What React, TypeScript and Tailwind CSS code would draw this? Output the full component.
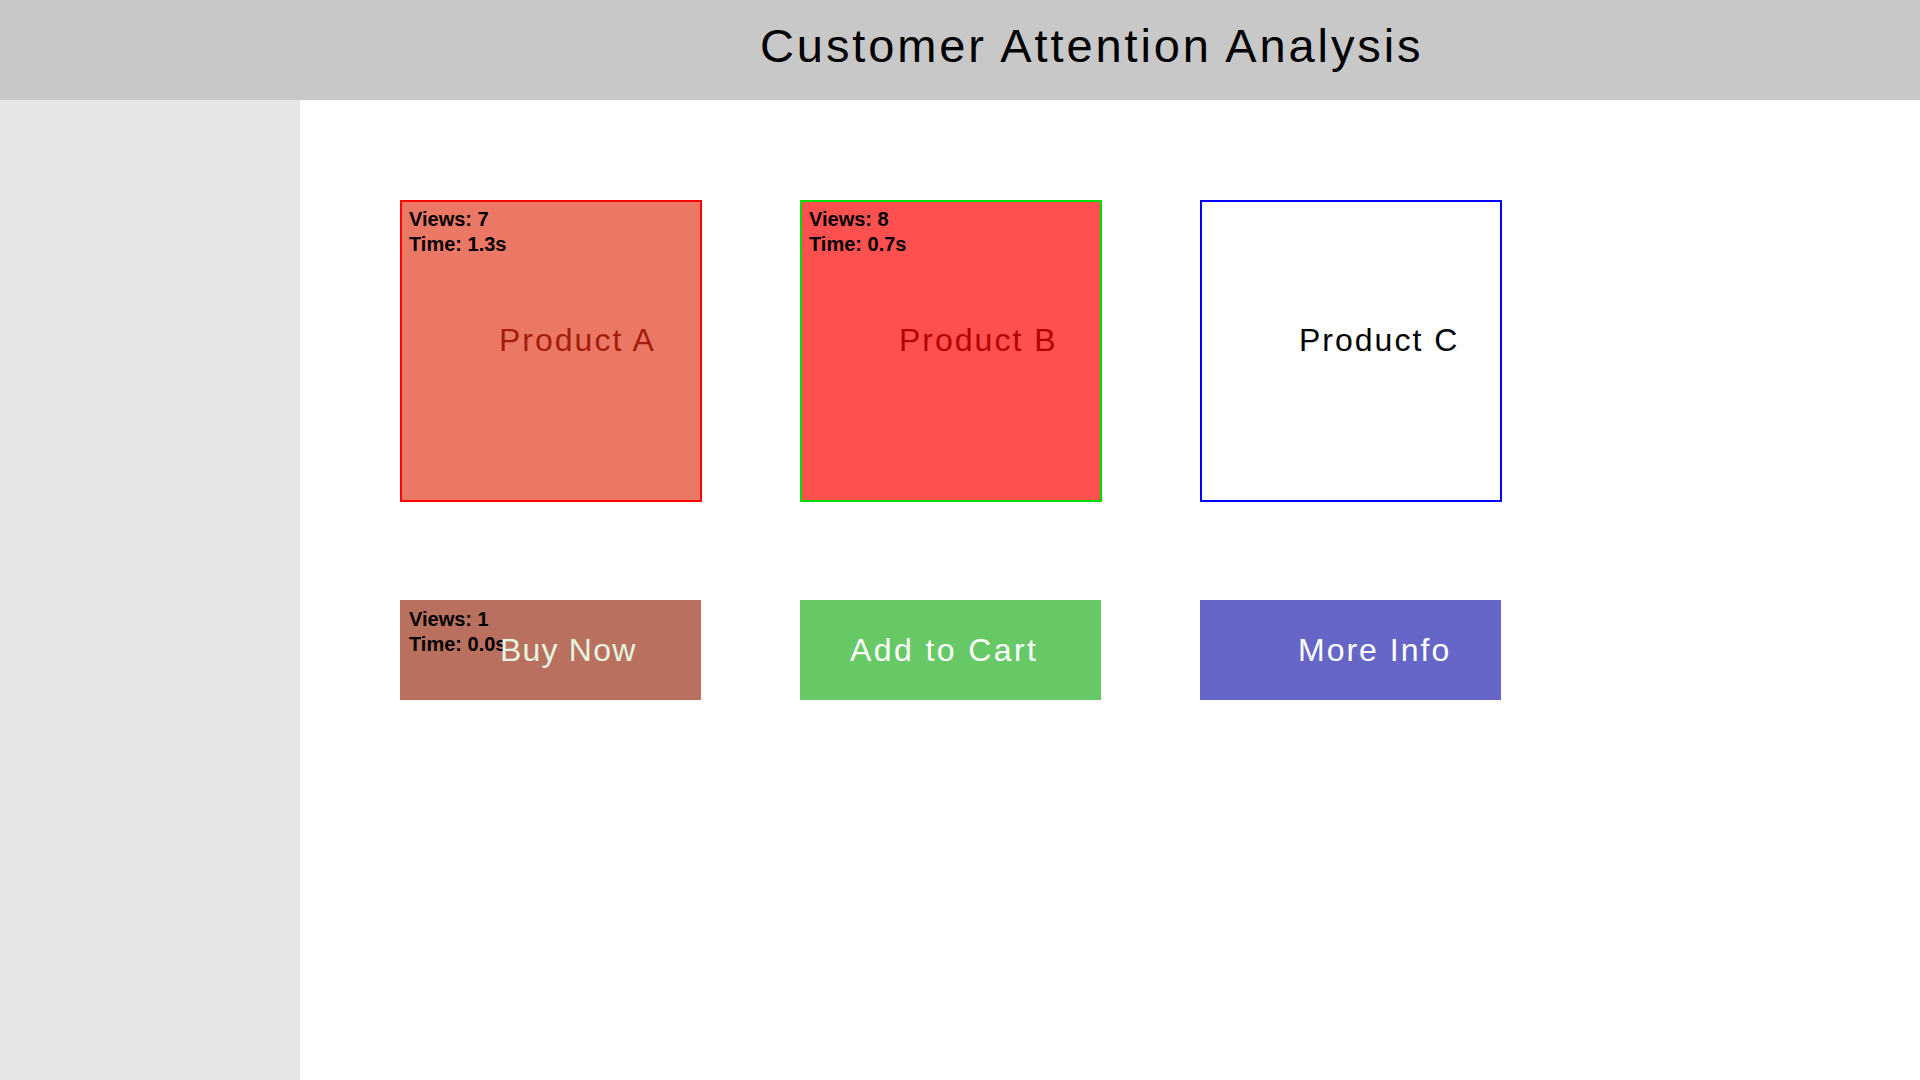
import type { ReactNode } from "react";

type Stats = { views: number; time: string };

function StatsOverlay({ stats, pos }: { stats: Stats; pos: string }) {
  return (
    <div className={`absolute ${pos} text-[20px] leading-[25px] tracking-normal font-bold text-black`}>
      <div>Views: {stats.views}</div>
      <div>Time: {stats.time}</div>
    </div>
  );
}

function ProductBox({
  label,
  className,
  textClass,
  stats,
}: {
  label: string;
  className: string;
  textClass: string;
  stats?: Stats;
}) {
  return (
    <div className={`relative w-[302px] h-[302px] border-2 pl-[97px] pt-[122px] ${className}`}>
      {stats && <StatsOverlay stats={stats} pos="left-[7px] top-[5px]" />}
      <div className={`text-[32px] leading-[32px] tracking-[2px] ${textClass}`}>{label}</div>
    </div>
  );
}

function ActionButton({
  children,
  className,
  textClass,
  stats,
}: {
  children: ReactNode;
  className: string;
  textClass: string;
  stats?: Stats;
}) {
  return (
    <div className={`relative w-[301px] h-[100px] pt-[34px] ${className}`}>
      {stats && <StatsOverlay stats={stats} pos="left-[9px] top-[7px]" />}
      <div className={`relative text-[32px] leading-[32px] ${textClass}`}>{children}</div>
    </div>
  );
}

export default function App() {
  return (
    <div className="flex flex-col min-h-screen h-[1080px] font-['Liberation_Sans',Arial,sans-serif]">
      {/* Header */}
      <header className="h-[100px] shrink-0 bg-[#c8c8c8] pl-[760px] pt-[22px]">
        <h1 className="text-[47px] leading-[47px] tracking-[2.9px] text-black font-normal">
          Customer Attention Analysis
        </h1>
      </header>

      <div className="flex flex-1">
        {/* Sidebar */}
        <aside className="w-[300px] bg-[#e6e6e6]" />

        {/* Content */}
        <main className="flex-1 bg-white pl-[100px] pt-[100px]">
          <div className="grid grid-cols-[302px_302px_302px] gap-x-[98px] gap-y-[98px]">
            <ProductBox
              label="Product A"
              className="border-[#ff0000] bg-[#eb7865]"
              textClass="text-[#a41c0c]"
              stats={{ views: 7, time: "1.3s" }}
            />
            <ProductBox
              label="Product B"
              className="border-[#00e000] bg-[#ff5050]"
              textClass="text-[#b40000]"
              stats={{ views: 8, time: "0.7s" }}
            />
            <ProductBox
              label="Product C"
              className="border-[#0000ff] bg-white"
              textClass="text-black"
            />

            <ActionButton
              className="bg-[#b9705e] pl-[100px]"
              textClass="text-[#e6f5e0] tracking-[1.2px]"
              stats={{ views: 1, time: "0.0s" }}
            >
              Buy Now
            </ActionButton>
            <ActionButton className="bg-[#66c966] pl-[50px]" textClass="text-white tracking-[2.4px]">
              Add to Cart
            </ActionButton>
            <ActionButton className="bg-[#6666c8] pl-[98px]" textClass="text-white tracking-[2px]">
              More Info
            </ActionButton>
          </div>
        </main>
      </div>
    </div>
  );
}
